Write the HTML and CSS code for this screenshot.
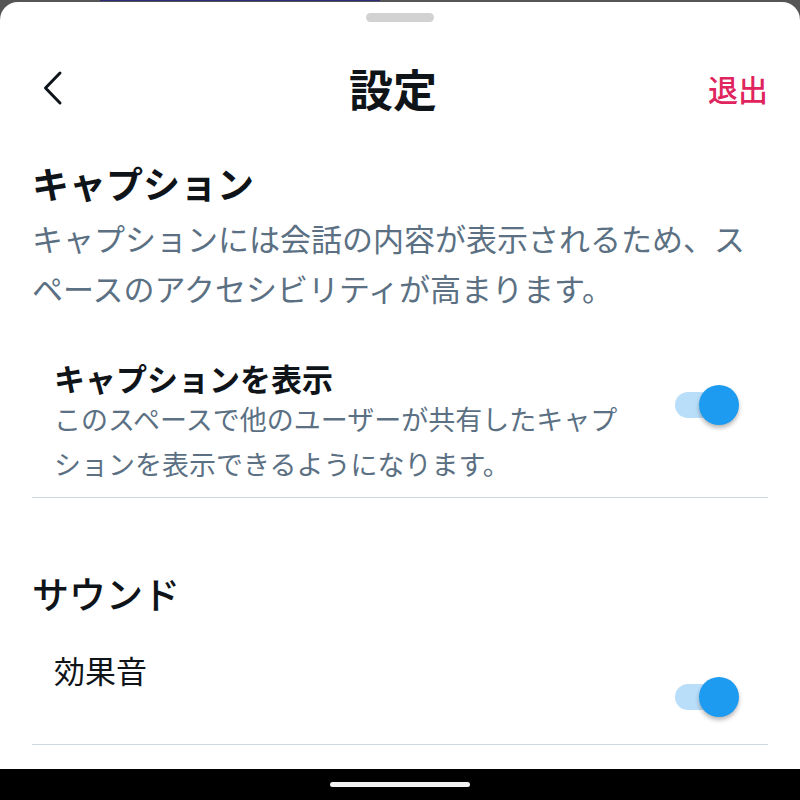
FILE: index.html
```html
<!DOCTYPE html>
<html lang="ja">
<head>
  <meta charset="UTF-8" />
  <meta name="viewport" content="width=device-width, initial-scale=1.0"/>
  <title>設定</title>
  <link rel="stylesheet" href="styles.css">
</head>
<body>
  <div class="peek"><span class="peek-bar"></span></div>

  <div class="sheet">
    <div class="handle"></div>

    <header class="header">
      <button class="back" aria-label="戻る">
        <svg width="24" height="36" viewBox="0 0 24 36"><path d="M19 3 L4.5 18 L19 33" fill="none" stroke="#0f1419" stroke-width="3" stroke-linecap="round" stroke-linejoin="round"/></svg>
      </button>
      <h1 class="title">設定</h1>
      <a class="leave" href="#">退出</a>
    </header>

    <section class="section">
      <h2 class="section-title">キャプション</h2>
      <p class="section-desc">キャプションには会話の内容が表示されるため、スペースのアクセシビリティが高まります。</p>

      <div class="row">
        <div class="row-text">
          <div class="row-title">キャプションを表示</div>
          <div class="row-desc">このスペースで他のユーザーが共有したキャプションを表示できるようになります。</div>
        </div>
        <div class="toggle on"><span class="track"></span><span class="knob"></span></div>
      </div>
    </section>

    <section class="section sound">
      <h2 class="section-title light">サウンド</h2>

      <div class="row tall">
        <div class="row-text">
          <div class="row-title light">効果音</div>
        </div>
        <div class="toggle on"><span class="track"></span><span class="knob"></span></div>
      </div>
    </section>
  </div>

  <div class="navbar"><span class="nav-pill"></span></div>
</body>
</html>
```

FILE: styles.css
```css
:root {
  --text: #0f1419;
  --muted: #5b7083;
  --line: #cfd9de;
  --blue: #1d9bf0;
  --blue-light: #b9def9;
  --pink: #e0245e;
}
* { box-sizing: border-box; }
html, body { height: 100%; }
body {
  margin: 0;
  height: 800px;
  display: flex;
  flex-direction: column;
  background-color: #555;
  font-family: "Noto Sans CJK JP", "Noto Sans", sans-serif;
  color: var(--text);
}
.peek {
  height: 2px;
  padding-left: 100px;
}
.peek-bar {
  display: block;
  width: 280px;
  height: 1px;
  background-color: #2b2b7a;
}
.sheet {
  flex: 1;
  background-color: #fff;
  border-radius: 18px 18px 0 0;
  padding: 0 32px;
  display: flex;
  flex-direction: column;
}
.handle {
  width: 68px;
  height: 9px;
  border-radius: 5px;
  background-color: #d2d2d2;
  margin: 11px auto 0;
}
.header {
  height: 132px;
  display: flex;
  align-items: center;
}
.back {
  width: 46px;
  height: 36px;
  padding: 0 0 0 9px;
  border: none;
  background: none;
  display: flex;
  align-items: center;
}
.title {
  flex: 1;
  margin: 0;
  text-align: center;
  font-size: 44px;
  font-weight: 700;
  line-height: 1;
}
.leave {
  color: var(--pink);
  text-decoration: none;
  font-size: 30px;
  font-weight: 500;
  line-height: 1;
}
.section-title {
  margin: 7px 0 0;
  font-size: 37px;
  line-height: 44px;
  font-weight: 700;
}
.section-title.light { font-weight: 500; }
.section-desc {
  margin: 8px 0 0;
  font-size: 31px;
  line-height: 50px;
  color: var(--muted);
}
.row {
  display: flex;
  align-items: flex-start;
  padding: 0 0 11px 22px;
  margin-top: 47px;
  border-bottom: 1px solid var(--line);
}
.section.sound { margin-top: 66px; }
.section.sound .row { margin-top: 37px; }
.row.tall { padding-bottom: 27px; }
.row-text { flex: 1; }
.row-title {
  font-size: 31px;
  line-height: 36px;
  font-weight: 700;
}
.row-title.light { font-weight: 400; }
.row-desc {
  font-size: 27px;
  line-height: 45px;
  color: var(--muted);
  padding-right: 40px;
}
.toggle {
  position: relative;
  width: 64px;
  height: 40px;
  margin: 25px 29px 0 0;
}
.track {
  display: block;
  width: 56px;
  height: 26px;
  margin-top: 7px;
  border-radius: 13px;
  background-color: var(--blue-light);
}
.knob {
  position: absolute;
  top: 0;
  right: 0;
  width: 40px;
  height: 40px;
  border-radius: 50%;
  background-color: var(--blue);
  box-shadow: 0 3px 4px rgba(0,0,0,0.28);
}
.navbar {
  height: 31px;
  background-color: #000;
  display: flex;
  align-items: center;
  justify-content: center;
}
.nav-pill {
  width: 140px;
  height: 5px;
  border-radius: 3px;
  background-color: #f2f2f2;
}
```
